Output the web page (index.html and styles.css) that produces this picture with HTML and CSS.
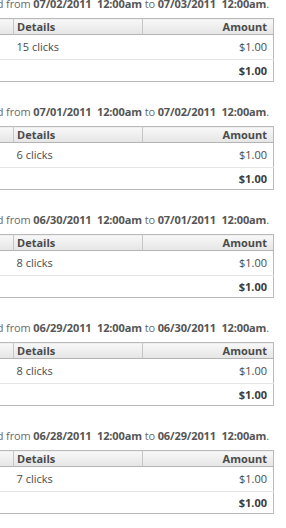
FILE: index.html
```html
<!DOCTYPE html>
<html lang="en">
<head>
<meta charset="utf-8">
<title>Billing history</title>
<link rel="stylesheet" href="styles.css">
</head>
<body>
<div class="history">
  <section class="period">
    <p class="period-title">Charged from <b>07/02/2011&nbsp; 12:00am</b> to <b>07/03/2011&nbsp; 12:00am</b>.</p>
    <table class="charges">
      <thead><tr><th class="c-type">Type</th><th class="c-details">Details</th><th class="c-amount">Amount</th></tr></thead>
      <tbody>
        <tr class="item"><td>Click</td><td>15 clicks</td><td class="num">$1.00</td></tr>
        <tr class="total"><td></td><td></td><td class="num">$1.00</td></tr>
      </tbody>
    </table>
  </section>
  <section class="period">
    <p class="period-title">Charged from <b>07/01/2011&nbsp; 12:00am</b> to <b>07/02/2011&nbsp; 12:00am</b>.</p>
    <table class="charges">
      <thead><tr><th class="c-type">Type</th><th class="c-details">Details</th><th class="c-amount">Amount</th></tr></thead>
      <tbody>
        <tr class="item"><td>Click</td><td>6 clicks</td><td class="num">$1.00</td></tr>
        <tr class="total"><td></td><td></td><td class="num">$1.00</td></tr>
      </tbody>
    </table>
  </section>
  <section class="period">
    <p class="period-title">Charged from <b>06/30/2011&nbsp; 12:00am</b> to <b>07/01/2011&nbsp; 12:00am</b>.</p>
    <table class="charges">
      <thead><tr><th class="c-type">Type</th><th class="c-details">Details</th><th class="c-amount">Amount</th></tr></thead>
      <tbody>
        <tr class="item"><td>Click</td><td>8 clicks</td><td class="num">$1.00</td></tr>
        <tr class="total"><td></td><td></td><td class="num">$1.00</td></tr>
      </tbody>
    </table>
  </section>
  <section class="period">
    <p class="period-title">Charged from <b>06/29/2011&nbsp; 12:00am</b> to <b>06/30/2011&nbsp; 12:00am</b>.</p>
    <table class="charges">
      <thead><tr><th class="c-type">Type</th><th class="c-details">Details</th><th class="c-amount">Amount</th></tr></thead>
      <tbody>
        <tr class="item"><td>Click</td><td>8 clicks</td><td class="num">$1.00</td></tr>
        <tr class="total"><td></td><td></td><td class="num">$1.00</td></tr>
      </tbody>
    </table>
  </section>
  <section class="period">
    <p class="period-title">Charged from <b>06/28/2011&nbsp; 12:00am</b> to <b>06/29/2011&nbsp; 12:00am</b>.</p>
    <table class="charges">
      <thead><tr><th class="c-type">Type</th><th class="c-details">Details</th><th class="c-amount">Amount</th></tr></thead>
      <tbody>
        <tr class="item"><td>Click</td><td>7 clicks</td><td class="num">$1.00</td></tr>
        <tr class="total"><td></td><td></td><td class="num">$1.00</td></tr>
      </tbody>
    </table>
  </section>
</div>
</body>
</html>
```
FILE: styles.css
```css
html, body {
  margin: 0;
  padding: 0;
  background: #fff;
  overflow: hidden;
}

body {
  font-family: "Open Sans", "DejaVu Sans", sans-serif;
  font-size: 11px;
  color: #444;
}

.history {
  margin: -2px 0 0 -39px;
  width: 313px;
}

.period {
  margin-bottom: 24px;
}

.period-title {
  margin: 0 0 8px;
  line-height: 12px;
  white-space: nowrap;
  color: #6a6a6a;
  letter-spacing: -0.12px;
}

.period-title b {
  color: #555;
  font-weight: 700;
}

.charges {
  width: 100%;
  border-collapse: collapse;
  border: 1px solid #b9b9b9;
  table-layout: fixed;
}

.charges th {
  height: 15px;
  padding: 0 6px 0 3px;
  text-align: left;
  font-weight: 700;
  color: #4a4a4a;
  background: linear-gradient(#f8f8f8, #e5e5e5);
  border-bottom: 1px solid #b4b4b4;
  border-left: 1px solid #c6c6c6;
  line-height: 15px;
}

.charges th.c-type { width: 42px; }
.charges th.c-details { width: 119px; }
.charges th.c-amount { text-align: right; }

.charges td {
  padding: 0 6px 0 3px;
  color: #4a4a4a;
  line-height: 14px;
}

.charges td:first-child {
  color: transparent;
}

.charges .item td {
  height: 24px;
  border-bottom: 1px solid #e4e4e4;
}

.charges .total td {
  height: 21px;
  font-weight: 700;
  color: #3c3c3c;
}

.charges .num {
  text-align: right;
}
```
